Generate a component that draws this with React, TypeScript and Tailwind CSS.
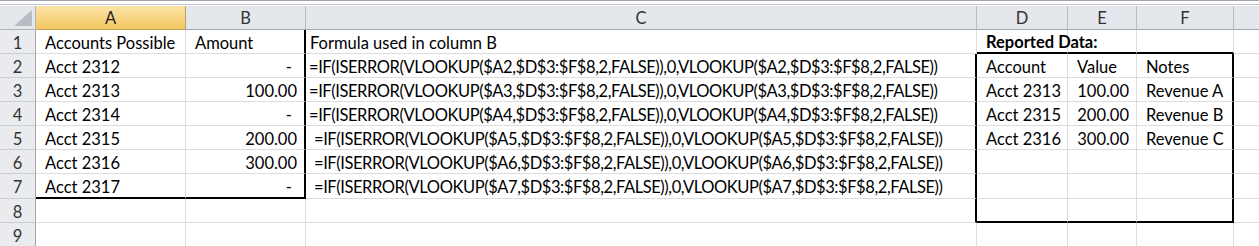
import React from "react";

const COLS = [
  { key: "A", w: 150 },
  { key: "B", w: 120 },
  { key: "C", w: 671 },
  { key: "D", w: 91 },
  { key: "E", w: 69 },
  { key: "F", w: 97 },
  { key: "G", w: 40 },
];

type Cell = { t?: string; align?: "l" | "r"; bold?: boolean; pl?: number; pr?: number; tight?: boolean };

const f = (r: number) =>
  `=IF(ISERROR(VLOOKUP($A${r},$D$3:$F$8,2,FALSE)),0,VLOOKUP($A${r},$D$3:$F$8,2,FALSE))`;

const ROWS: { h: number; cells: Record<string, Cell> }[] = [
  {
    h: 24,
    cells: {
      A: { t: "Accounts Possible" },
      B: { t: "Amount" },
      C: { t: "Formula used in column B", pl: 4 },
      D: { t: "Reported Data:", bold: true },
    },
  },
  {
    h: 24,
    cells: {
      A: { t: "Acct 2312" },
      B: { t: "-", align: "r", pr: 12 },
      C: { t: f(2), pl: 3, tight: true },
      D: { t: "Account" },
      E: { t: "Value" },
      F: { t: "Notes" },
    },
  },
  {
    h: 24,
    cells: {
      A: { t: "Acct 2313" },
      B: { t: "100.00", align: "r" },
      C: { t: f(3), pl: 3, tight: true },
      D: { t: "Acct 2313" },
      E: { t: "100.00", align: "r" },
      F: { t: "Revenue A" },
    },
  },
  {
    h: 24,
    cells: {
      A: { t: "Acct 2314" },
      B: { t: "-", align: "r", pr: 12 },
      C: { t: f(4), pl: 3, tight: true },
      D: { t: "Acct 2315" },
      E: { t: "200.00", align: "r" },
      F: { t: "Revenue B" },
    },
  },
  {
    h: 24,
    cells: {
      A: { t: "Acct 2315" },
      B: { t: "200.00", align: "r" },
      C: { t: f(5), pl: 8, tight: true },
      D: { t: "Acct 2316" },
      E: { t: "300.00", align: "r" },
      F: { t: "Revenue C" },
    },
  },
  {
    h: 24,
    cells: {
      A: { t: "Acct 2316" },
      B: { t: "300.00", align: "r" },
      C: { t: f(6), pl: 8, tight: true },
    },
  },
  {
    h: 25,
    cells: {
      A: { t: "Acct 2317" },
      B: { t: "-", align: "r", pr: 12 },
      C: { t: f(7), pl: 8, tight: true },
    },
  },
  { h: 24, cells: {} },
  { h: 24, cells: {} },
];

function borderClasses(col: string, row: number): string {
  const right =
    (col === "B" && row >= 1 && row <= 7) ||
    (col === "C" && row >= 2 && row <= 8) ||
    (col === "F" && row >= 2 && row <= 8);
  const bottom =
    ((col === "A" || col === "B") && row === 7) ||
    ((col === "D" || col === "E" || col === "F") && (row === 1 || row === 8));
  const r = right ? "border-r-2 border-r-black" : "border-r border-r-[#dadcdd]";
  const b = bottom ? "border-b-2 border-b-black" : "border-b border-b-[#dadcdd]";
  return `${r} ${b}`;
}

export default function App() {
  return (
    <div
      className="w-[1259px] h-[246px] overflow-hidden bg-white text-black"
      style={{ fontFamily: "Lato, 'Liberation Sans', sans-serif" }}
    >
      {/* top strip */}
      <div className="h-[6px] border-t border-t-[#a3a6aa] bg-white">
        <div className="mt-[3px] h-px bg-[#c5c8cc]" />
      </div>
      {/* column header */}
      <div className="flex h-[24px]">
        <div className="w-[36px] shrink-0 border-r border-b border-[#b1b5ba] bg-[#e4e7eb] flex items-end justify-end p-[3px]">
          <svg width="18" height="16" viewBox="0 0 18 16">
            <polygon points="18,0 18,16 0,16" fill="#b9bdc3" />
          </svg>
        </div>
        {COLS.map((c) => (
          <div
            key={c.key}
            style={{ width: c.w }}
            className={
              "shrink-0 flex items-center justify-center pt-[2px] text-[16.5px] border-r border-b " +
              (c.key === "A"
                ? "bg-gradient-to-b from-[#fbe3a8] to-[#f4c75f] border-r-[#c2a05b] border-b-[#c2a05b] text-[#222]"
                : "bg-[#e4e7eb] border-r-[#b8bdc3] border-b-[#9fa7b1] text-[#333]")
            }
          >
            {c.key === "G" ? "" : c.key}
          </div>
        ))}
      </div>
      {ROWS.map((row, i) => {
        const rn = i + 1;
        return (
          <div key={rn} className="flex" style={{ height: row.h }}>
            <div className="w-[36px] shrink-0 flex items-center justify-center pt-[3px] bg-[#e9ebee] border-r border-r-[#9fa7b1] border-b border-b-[#c9ced4] text-[16.5px] text-[#333] leading-none">
              {rn}
            </div>
            {COLS.map((c) => {
              const cell = row.cells[c.key] || {};
              const pl = cell.pl ?? 9;
              const pr = cell.pr ?? 7;
              return (
                <div
                  key={c.key}
                  style={{ width: c.w, paddingLeft: cell.align === "r" ? 0 : pl, paddingRight: cell.align === "r" ? pr : 0 }}
                  className={
                    "shrink-0 flex items-center pt-[3px] whitespace-nowrap overflow-visible text-[16.5px] leading-none " +
                    (cell.align === "r" ? "justify-end " : "justify-start ") +
                    (cell.bold ? "font-bold " : "") +
                    (cell.tight ? "tracking-[-0.42px] " : "") +
                    borderClasses(c.key, rn)
                  }
                >
                  {cell.t ? <span className="relative z-10">{cell.t}</span> : null}
                </div>
              );
            })}
          </div>
        );
      })}
    </div>
  );
}
